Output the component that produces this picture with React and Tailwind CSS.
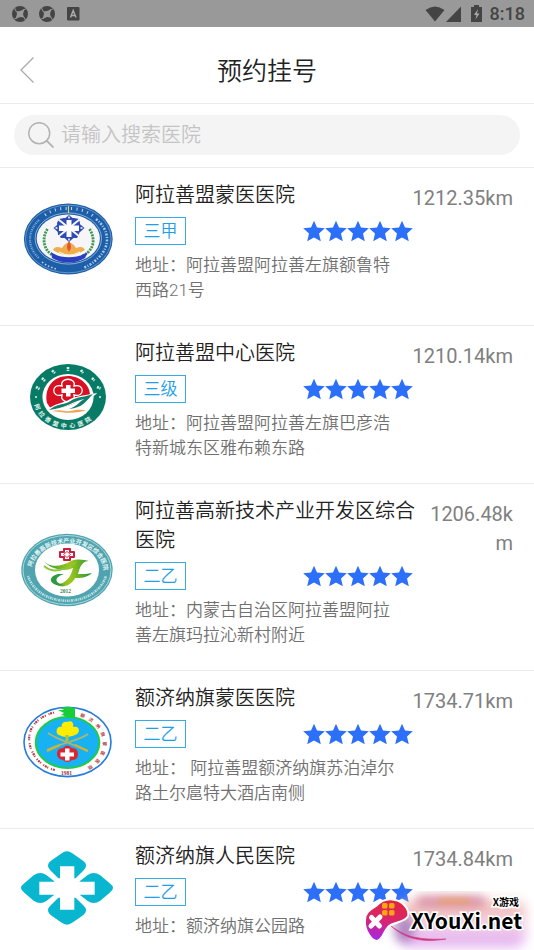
import React from 'react';

const HOSPITALS = [
  { name: '阿拉善盟蒙医医院', level: '三甲', address: '地址：阿拉善盟阿拉善左旗额鲁特西路21号', distance: '1212.35km', Logo: LogoMengyi },
  { name: '阿拉善盟中心医院', level: '三级', address: '地址：阿拉善盟阿拉善左旗巴彦浩特新城东区雅布赖东路', distance: '1210.14km', Logo: LogoCentral },
  { name: '阿拉善高新技术产业开发区综合医院', level: '二乙', address: '地址：内蒙古自治区阿拉善盟阿拉善左旗玛拉沁新村附近', distance: '1206.48km', Logo: LogoHighTech },
  { name: '额济纳旗蒙医医院', level: '二乙', address: '地址： 阿拉善盟额济纳旗苏泊淖尔路土尔扈特大酒店南侧', distance: '1734.71km', Logo: LogoEjina },
  { name: '额济纳旗人民医院', level: '二乙', address: '地址：额济纳旗公园路', distance: '1734.84km', Logo: LogoPeople },
];

function LogoMengyi() {
  return (
    <svg viewBox="0 0 92 74" className="h-[74px] w-[92px]" aria-hidden="true">
      <ellipse cx="47.3" cy="37" rx="44.4" ry="35.4" fill="#1d5ea8" />
      <ellipse cx="47.3" cy="37" rx="42.8" ry="33.8" fill="none" stroke="#a9c8e6" strokeWidth="0.5" />
      <ellipse cx="47.3" cy="36.5" rx="33.2" ry="25.6" fill="none" stroke="#b9d2ea" strokeWidth="0.7" />
      <ellipse cx="47.3" cy="36.5" rx="31.6" ry="24" fill="#f6f6f8" />
      <path d="M24 13 C33 7 39 6.500 46 6.500" stroke="#c5daef" strokeWidth="3" strokeDasharray="1 4.500" fill="none" />
      <path d="M50 6.500 C60 7 67 10 72 14" stroke="#c5daef" strokeWidth="3" strokeDasharray="1 4.500" fill="none" />
      <path d="M47.500 4v7" stroke="#d8d27a" strokeWidth="1.200" />
      <path d="M18 18 C6 29 6 46 18 56" stroke="#7eabd8" strokeWidth="2.200" strokeDasharray="1.200 .8 .8 1" fill="none" />
      <path d="M21 60 C26 64 31 66 36 67" stroke="#c5daef" strokeWidth="1.600" strokeDasharray="1.500 2" fill="none" />
      <path d="M75 17 C90 29 89 46 76 57 C71 62 67 64 62 66" stroke="#a9c9e8" strokeWidth="2.600" strokeDasharray="2 1.500 1 1.500" fill="none" />
      <g fill="#2e4cb4">
        <path d="M48 13 L63.500 26 L48 40 L32.500 26z" />
        <path d="M38 17l5-1 10 0 5 1 1 4-1 12-2 3H40l-3-3-1-12z" />
      </g>
      <path d="M37.500 17.500l21 17M58.500 17.500l-21 17" stroke="#f6f6f8" strokeWidth="2" />
      <path d="M45.500 18h5v5.500h7.500v5.500h-7.500v6h-5v-6h-7.500v-5.500h7.500z" fill="#fff" />
      <path d="M48 14.500v2M48 36.500v2M34.500 26h2M59.500 26h2" stroke="#fff" strokeWidth="1.500" />
      <path d="M26.500 27 C20 37 23 49 33 54" fill="none" stroke="#3f9654" strokeWidth="2.800" strokeDasharray="2 1" />
      <path d="M68.500 27 C75 37 73 49 61 54" fill="none" stroke="#3f9654" strokeWidth="2.800" strokeDasharray="2 1" />
      <path d="M30 50 C39 57 56 57 67 50 L64 56 C54 62 41 62 31 56z" fill="#293fc0" />
      <path d="M32 48 Q34 43 41 46 Q43 42 48 40 Q53 42 55 46 Q62 43 64 48 Q56 53 48 53 Q39 53 32 48z" fill="#efad4e" />
      <path d="M38 50 Q48 56 59 50" stroke="#fff0cf" strokeWidth="1.200" fill="none" />
      <path d="M48 39 Q52 45 48 50 Q44 45 48 39z" fill="#df5731" />
    </svg>
  );
}

function LogoCentral() {
  return (
    <svg viewBox="0 0 92 74" className="h-[74px] w-[92px]" aria-hidden="true">
      <defs>
        <path id="c-ring" d="M12.500 38 A34.500 30 0 0 0 81.500 38" />
      </defs>
      <ellipse cx="47" cy="37" rx="38" ry="33" fill="#087b66" />
      <ellipse cx="47" cy="37" rx="25.600" ry="23" fill="#fff" />
      <path d="M15 27l3.500 2M21 18l3 3M31 10.500l3 2.500M47 7v4M60 10l2 3M71 18l2.500 2.500M76 27l3.500 1.500" stroke="#d8f0e8" strokeWidth="2.600" strokeDasharray="2 .7 1.500 1" />
      <g fill="#e3f4ef"><circle cx="15" cy="37" r="1" /><circle cx="79" cy="37" r="1" /></g>
      <text fontSize="6" fontWeight="700" fill="#e8f6f2" className="font-['Noto_Sans_CJK_SC',sans-serif]">
        <textPath href="#c-ring" startOffset="7">{'阿\u2002拉\u2002善\u2002盟\u2002中\u2002心\u2002医\u2002院'}</textPath>
      </text>
      <path d="M26 43 C23 27 33 16 47 16 C60 16 70 26 69 37 C58 39 48 49 30 49z" fill="#d90f22" />
      <path d="M41 26 C38 17 56 17 53 26 C64 23 64 38 53 35 C56 44 38 44 41 35 C30 38 30 23 41 26z" fill="none" stroke="#fff" strokeWidth="1.300" />
      <path d="M45 25h4.500v3.500h4.500v4.500h-4.500v3.500h-4.500v-3.500h-4.500v-4.500h4.500z" fill="#fff" />
      <path d="M27 50 C39 42 43 45 50 40 C55 37 66 36 72 35 C66 40 63 48 50 51 C56 45 57 42 61 39 C50 42 45 48 27 50z" fill="#fff" stroke="#fff" strokeWidth="2.500" />
      <path d="M28 50 C39 42 43 46 51 40 C56 37 64 37 72 34 C66 40 62 48 48 49 C55 47 58 42 63 39 C53 41 45 48 28 50z" fill="#107e6a" />
      <path d="M31 51 C40 49 44 52 49 51 C57 49 61 50 65 50 C58 53 48 54 31 51z" fill="#f2a353" />
    </svg>
  );
}

function LogoHighTech() {
  return (
    <svg viewBox="0 0 92 74" className="h-[74px] w-[92px]" aria-hidden="true">
      <defs>
        <path id="h-top" d="M10 40 A36.500 30 0 0 1 83 40" />
        <linearGradient id="h-green" x1="0" x2="1"><stop stopColor="#27973c" /><stop offset=".55" stopColor="#a0c718" /><stop offset="1" stopColor="#20943c" /></linearGradient>
      </defs>
      <ellipse cx="46" cy="37" rx="45.700" ry="36.200" fill="#50a4af" />
      <ellipse cx="46" cy="37" rx="44" ry="34.500" fill="none" stroke="#c0e4e6" strokeWidth=".8" />
      <ellipse cx="46" cy="37" rx="32" ry="26.500" fill="#fff" />
      <text fontSize="6" fontWeight="700" fill="#e5f6f7" className="font-['Noto_Sans_CJK_SC',sans-serif]">
        <textPath href="#h-top" startOffset="6">阿拉善高新技术产业开发区综合医院</textPath>
      </text>
      <path d="M7 43 C18 76 74 76 85 43" fill="none" stroke="#b6dde1" strokeWidth="2.600" strokeDasharray="1 .8 1.800 .7" />
      <path d="M43 16h6v3h4v5h-4v3h-6v-3h-4v-5h4z" fill="#fff" stroke="#cc1e40" strokeWidth="2" strokeLinejoin="round" />
      <path d="M46 18.500l3.500 3-3.500 3-3.500-3z" fill="#fff" stroke="#d53850" strokeWidth="1" />
      <path d="M22 27 C28 35 40 34 50 28 C57 25 64 27 68 28 C61 28 59 34 57 41 C62 41 67 41 71 40 C65 45 60 45 54 45 C50 53 40 56 35 51 C46 51 50 43 52 35 C43 39 30 37 22 27z" fill="url(#h-green)" />
      <path d="M23 33 C32 41 44 37 55 29" fill="none" stroke="#8cc63a" strokeWidth="1.800" />
      <path d="M37 41 C23 45 32 55 44 52 C35 51 31 45 43 41z" fill="#2b9a42" />
      <text x="39" y="60" fontSize="5.500" fontWeight="700" fill="#428052" className="font-['Liberation_Serif',serif]">2012</text>
    </svg>
  );
}

function LogoEjina() {
  return (
    <svg viewBox="0 0 92 74" className="h-[74px] w-[92px]" aria-hidden="true">
      <defs>
        <path id="e-ring" d="M58 11 A36 29 0 0 1 60 65" />
      </defs>
      <ellipse cx="46.500" cy="37" rx="43.500" ry="34.600" fill="#fff" stroke="#247ddd" strokeWidth="1.600" />
      <ellipse cx="46.500" cy="37.500" rx="31.800" ry="25.500" fill="#18b2f3" stroke="#20cb48" strokeWidth="2" />
      <path d="M44 2h6l4 1.500v9.500c-4-1-7 1-8-1-2 0-3-2-6-2l3-2-6-3 6 0-3-2z" fill="#17ce37" />
      <path d="M33 7.500 C12 13 3 29 11 46 C16 57 25 63 34 65" fill="none" stroke="#b83945" strokeWidth="2.200" strokeDasharray="1 1 2 .7 1 3" />
      <text fontSize="4.500" fontWeight="700" fill="#b83b45" className="font-['Noto_Sans_CJK_SC',sans-serif]">
        <textPath href="#e-ring" startOffset="1">{'额\u2003济\u2003纳\u2003旗\u2003蒙\u2003医\u2003医\u2003院'}</textPath>
      </text>
      <text x="40" y="70" fontSize="5.500" fontWeight="700" fill="#9e313a" className="font-['Liberation_Serif',serif]">1981</text>
      <path d="M46 17 C41 16 40 21 41 22 C35 20 34 29 38 30 C43 33 50 32 54 30 C60 28 59 20 52 22 C53 18 51 15 46 17z" fill="#ffec00" />
      <path d="M46 30v6" stroke="#b7c32f" strokeWidth="3" />
      <path d="M27 28 C39 36 53 39 66 46 M67 29 C56 37 41 37 26 45" stroke="#b3b568" strokeWidth="1.600" fill="none" />
      <path d="M54 40L67 46M39 40L26 46" stroke="#d7b22d" strokeWidth="2" />
      <path d="M42 43 Q46 38 51 43 Q57 43 57 49 Q57 55 51 55 Q46 59 42 55 Q36 54 36 49 Q36 43 42 43z" fill="#dc2533" />
      <path d="M44 43.500h4.500v4h4.500v4h-4.500v4h-4.500v-4h-4.500v-4h4.500z" fill="#fff" />
    </svg>
  );
}

function LogoPeople() {
  return (
    <svg viewBox="0 0 276 222" className="h-[74px] w-[92px]" aria-hidden="true">
      <g fill="#08b7cf">
        <path d="M138 1 Q146 1 156 8 L184 28 Q195 35 195 45 Q195 52 186 60 L164 82 H112 L90 60 Q81 52 81 45 Q81 35 92 28 L120 8 Q130 1 138 1z" />
        <path d="M138 221 Q146 221 156 214 L184 194 Q195 187 195 177 Q195 170 186 162 L164 140 H112 L90 162 Q81 170 81 177 Q81 187 92 194 L120 214 Q130 221 138 221z" />
        <path d="M0 111 Q0 104 10 97 L38 73 Q58 60 76 72 L100 91 V131 L76 150 Q58 162 38 149 L10 125 Q0 118 0 111z" />
        <path d="M276 111 Q276 104 266 97 L238 73 Q218 60 200 72 L176 91 V131 L200 150 Q218 162 238 149 L266 125 Q276 118 276 111z" />
      </g>
      <path d="M117 46h43v46h61v39h-61v45h-43v-45h-62v-39h62z" fill="#fff" />
    </svg>
  );
}

function Stars() {
  return (
    <div className="flex" role="img" aria-label="5">
      {[0, 1, 2, 3, 4].map((i) => (
        <svg key={i} viewBox="0 0 22 22" className="h-[22px] w-[22px]" aria-hidden="true">
          <path d="M11 0.800 L14 7.600 L21.800 8.300 L16 13.500 L17.800 21.300 L11 17.400 L4.200 21.300 L6 13.500 L0.200 8.300 L8 7.600z" fill="#2b6ffa" />
        </svg>
      ))}
    </div>
  );
}

function StatusBar() {
  return (
    <div className="flex h-[27px] items-center bg-[#999] pl-3 pr-[9px] text-[#444]">
      {[0, 1].map((i) => (
        <svg key={i} viewBox="0 0 16 16" className="mr-[11px] h-4 w-4" aria-hidden="true">
          <circle cx="8" cy="8" r="8" fill="currentColor" />
          <path d="M4.500 5.500 L8 5 L12.500 3 L11 8 L12 11.500 L8 11 L3.500 13 L5 8z" fill="#999" />
          <path d="M4.500 6L2.500 2M10.500 4.500L14.500 2.500M11.500 10.500L13.500 14M5.500 11.500L1.500 13.500" stroke="#999" strokeWidth="1" />
        </svg>
      ))}
      <svg viewBox="0 0 13 14" className="ml-px h-[14px] w-[13px]" aria-hidden="true">
        <rect width="12.500" height="13.500" rx="1" fill="currentColor" />
        <path d="M3.500 10.500L6.200 3.500L9 10.500M4.600 8.500H8" fill="none" stroke="#aaa" strokeWidth="1.500" />
      </svg>
      <div className="ml-auto flex items-center">
        <svg viewBox="0 0 20 16" className="h-4 w-5" aria-hidden="true">
          <path d="M0.500 4 Q10 -3 19.500 4 L10 15.500z" fill="currentColor" />
        </svg>
        <svg viewBox="0 0 15 16" className="ml-px h-4 w-[15px]" aria-hidden="true">
          <path d="M15 0.500V16H0z" fill="currentColor" />
        </svg>
        <svg viewBox="0 0 11 17" className="ml-[10px] h-[17px] w-[11px]" aria-hidden="true">
          <path d="M3 0h5v2h3v15H0V2h3z" fill="currentColor" />
          <path d="M7 4L3 10h2.500l-1 4.500L8.500 8.500H6z" fill="#aaa" />
        </svg>
        <span className="ml-2 text-lg font-medium leading-[27px]">8:18</span>
      </div>
    </div>
  );
}

function HospitalRow({ name, level, address, distance, Logo }) {
  return (
    <li className="flex items-center border-b border-[#ececec] px-[21px] pb-[22px] pt-[13px] last:border-b-0 last:pb-3">
      <div className="shrink-0 pb-[6px]"><Logo /></div>
      <div className="ml-[22px] min-w-0 flex-1">
        <div className="flex items-start justify-between">
          <h2 className="max-w-[280px] shrink-0 text-xl font-[350] leading-[29px] text-[#222]">{name}</h2>
          <p className="-mb-1 min-w-0 break-all pt-[3px] text-right text-xl leading-[29px] text-[#808080]">{distance}</p>
        </div>
        <div className="mt-[7px] flex h-7 max-w-[278px] items-center justify-between">
          <span className="flex h-7 w-[51px] items-center justify-center border border-[#35abe8] text-[17px] font-[350] leading-6 text-[#1e9fe6]">{level}</span>
          <Stars />
        </div>
        <p className="mt-2 max-w-[264px] text-[17px] font-[350] leading-[25px] text-[#707070]">{address}</p>
      </div>
    </li>
  );
}

function Watermark() {
  return (
    <div className="absolute bottom-0 right-0 h-[60px] w-[172px] overflow-hidden">
      <div className="absolute bottom-1 right-2 h-[46px] w-[126px] rounded-xl bg-linear-to-b from-[#f0b5a8] via-[#f3d6ea] to-[#dfa6f0] blur-[6px]" />
      <div className="absolute right-12 top-1 h-3 w-[70px] rounded-full bg-[#c0527f]/50 blur-[5px]" />
      <div className="absolute right-16 top-2 h-1 w-8 rounded-full bg-[#f0a030]/70 blur-[3px]" />
      <div className="absolute bottom-2 left-8 h-7 w-5 rounded-full bg-[#75409a]/50 blur-[5px]" />
      <svg viewBox="0 0 172 60" className="absolute inset-0 h-[60px] w-[172px]" aria-hidden="true">
        <defs>
          <linearGradient id="pad" x1=".5" y1="0" x2=".3" y2="1"><stop stopColor="#e02640" /><stop offset=".5" stopColor="#d8256e" /><stop offset="1" stopColor="#a526ee" /></linearGradient>
        </defs>
        <path d="M29 35 C44 46 56 49 84 48 C60 52 44 48 29 35z" fill="#d2387e" stroke="#d2387e" strokeWidth=".6" />
        <path d="M3 29 C3 21 9 18 14 15 C20 9 26 7 33 9 C40 10 48 18 46 25 C44 31 33 31 27 35 C21 41 21 49 15 50 C10 50 2 40 3 29z" fill="url(#pad)" stroke="#fff" strokeWidth="2" />
        <path d="M9.500 26.500l8 8.500M18 26L9 35" stroke="#fff" strokeWidth="5" strokeLinecap="round" />
        <g fill="#ffa514">
          <rect x="20" y="12" width="5.500" height="5.500" rx="1.500" /><rect x="27" y="12" width="5.500" height="5.500" rx="1.500" />
          <rect x="20" y="19" width="5.500" height="5.500" rx="1.500" /><rect x="27" y="19" width="5.500" height="5.500" rx="1.500" />
        </g>
      </svg>
      <div className="relative flex flex-col items-end pr-3 pt-1 font-['Noto_Sans_CJK_SC',sans-serif] font-bold text-black [paint-order:stroke_fill] [-webkit-text-stroke:3px_white]">
        <span className="pr-[3px] text-[10px] leading-[14px]">X游戏</span>
        <span className="text-[21px] leading-[22px]">XYouXi.net</span>
      </div>
    </div>
  );
}

export default function App() {
  return (
    <div className="relative w-full overflow-hidden bg-white font-[Roboto,'Noto_Sans_CJK_SC',sans-serif]">
      <StatusBar />
      <header className="grid h-[77px] grid-cols-[64px_1fr_64px] items-center border-b border-[#ececec]">
        <button type="button" aria-label="返回" className="flex h-full items-center pb-px pl-5 pt-[11px]">
          <svg viewBox="0 0 14 26" className="h-[26px] w-[14px]" aria-hidden="true">
            <path d="M13.500 0.500L1 13L13.500 25.500" fill="none" stroke="#aaa" strokeWidth="1.300" />
          </svg>
        </button>
        <h1 className="pt-[14px] text-center text-[25px] font-[350] leading-9 text-[#222]">预约挂号</h1>
      </header>
      <div className="border-b border-[#ececec] px-[14px] pb-3 pt-[11px]">
        <label className="flex h-10 items-center rounded-full bg-[#f4f4f4] pl-[14px]">
          <svg viewBox="0 0 26 26" className="h-[26px] w-[26px] shrink-0" aria-hidden="true">
            <circle cx="11.200" cy="11.200" r="10.500" fill="none" stroke="#b3b3b3" strokeWidth="1.500" />
            <path d="M18.500 18.500L25.500 25.500" stroke="#b3b3b3" strokeWidth="1.800" />
          </svg>
          <input type="search" aria-label="搜索医院" placeholder="请输入搜索医院" className="ml-[7px] h-10 min-w-0 flex-1 bg-transparent text-xl font-[350] text-[#333] outline-none placeholder:text-[#c4c4c4]" />
        </label>
      </div>
      <ul>
        {HOSPITALS.map((h) => <HospitalRow key={h.name} {...h} />)}
      </ul>
      <Watermark />
    </div>
  );
}
